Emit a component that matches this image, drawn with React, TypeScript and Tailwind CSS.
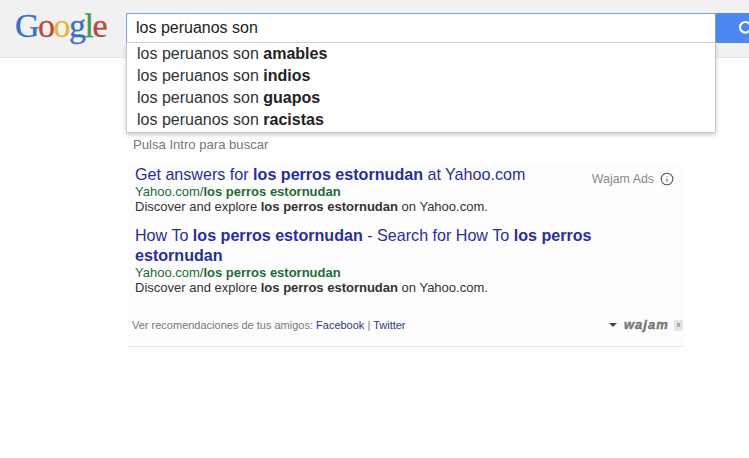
import { Info, Search } from "lucide-react"

const suggestions = ["amables", "indios", "guapos", "racistas"]

const Q = "los perros estornudan"

function Logo() {
  return (
    <div className="w-[126px] shrink-0 pl-[15px] pt-[6px] font-['Liberation_Serif',serif] text-[34px] leading-[40px] tracking-[-1.5px] [-webkit-text-stroke:0.3px]">
      <span className="text-[#3a6fc4]">G</span>
      <span className="text-[#c0453a]">o</span>
      <span className="text-[#e4b63c]">o</span>
      <span className="text-[#3a6fc4]">g</span>
      <span className="text-[#3f9b52]">l</span>
      <span className="text-[#c0453a]">e</span>
    </div>
  )
}

function Header() {
  return (
    <header className="relative flex h-[58px] border-b border-[#e5e5e5] bg-[#f1f1f1] pt-[13px]">
      <div className="-mt-[13px] shrink-0">
        <Logo />
      </div>
      <div className="flex h-[30px] w-[590px] shrink-0 items-center border border-[#7f9fd0] border-b-[#d4d4d4] bg-white pl-[9px] text-[16px] text-[#222]">
        los peruanos son
      </div>
      <button className="flex h-[30px] min-w-0 flex-1 items-center justify-start overflow-hidden bg-[#4d87f0] pl-[22px] text-white">
        <Search size={16} strokeWidth={3.2} className="shrink-0" />
      </button>
      <ul className="absolute left-[126px] top-[43px] w-[590px] border border-t-0 border-[#c9c9c9] bg-white pb-[1px] pl-[10px] shadow-[0_2px_4px_rgba(0,0,0,0.2)]">
        {suggestions.map((s) => (
          <li key={s} className="h-[22px] text-[16px] leading-[22px] text-[#333]">
            los peruanos son <b className="text-[#222]">{s}</b>
          </li>
        ))}
      </ul>
    </header>
  )
}

function Ad({ title }: { title: React.ReactNode }) {
  return (
    <div className="w-[470px]">
      <h3 className="text-[16.1px] leading-[20px] text-[#2a2f96]">{title}</h3>
      <div className="text-[13px] leading-[15px] text-[#1f6b37]">
        Yahoo.com/<b>{Q}</b>
      </div>
      <div className="text-[13px] leading-[15px] text-[#333]">
        Discover and explore <b>{Q}</b> on Yahoo.com.
      </div>
    </div>
  )
}

export default function App() {
  return (
    <div className="h-[458px] w-[749px] overflow-hidden bg-white font-['Liberation_Sans',Arial,sans-serif]">
      <Header />
      <main className="ml-[127px] w-[557px]">
        <p className="pl-[6px] pt-[78px] text-[13.1px] leading-[18px] text-[#777]">Pulsa Intro para buscar</p>
        <section className="mt-[10px] border-b border-[#e8e8e8] bg-[#fdfdfd] pb-[14px]">
          <div className="relative flex flex-col gap-[11px] pl-[8px]">
            <Ad
              title={
                <>
                  Get answers for <b>{Q}</b> at Yahoo.com
                </>
              }
            />
            <Ad
              title={
                <>
                  How To <b>{Q}</b> - Search for How To <b>{Q}</b>
                </>
              }
            />
            <div className="absolute right-[10px] top-[6px] flex items-center gap-[6px] text-[12.4px] text-[#8a8a8a]">
              Wajam Ads <Info size={14} strokeWidth={1.8} className="text-[#555]" />
            </div>
          </div>
          <div className="mt-[23px] flex items-center pl-[5px] pr-[1px] text-[11px] leading-[14px] text-[#777]">
            <span>
              Ver recomendaciones de tus amigos: <span className="text-[#2a3a80]">Facebook</span> |{" "}
              <span className="text-[#2a3a80]">Twitter</span>
            </span>
            <span className="ml-auto mr-[7px] h-0 w-0 border-x-[4px] border-t-[4px] border-x-transparent border-t-[#444]" />
            <span className="w-[43px] text-[13px] font-black italic tracking-[1px] text-[#777] [-webkit-text-stroke:0.4px]">wajam</span>
            <span className="ml-[7px] flex h-[11px] w-[9px] items-center justify-center bg-[#e6e6e6] text-[8px] text-[#666]">x</span>
          </div>
        </section>
      </main>
    </div>
  )
}
